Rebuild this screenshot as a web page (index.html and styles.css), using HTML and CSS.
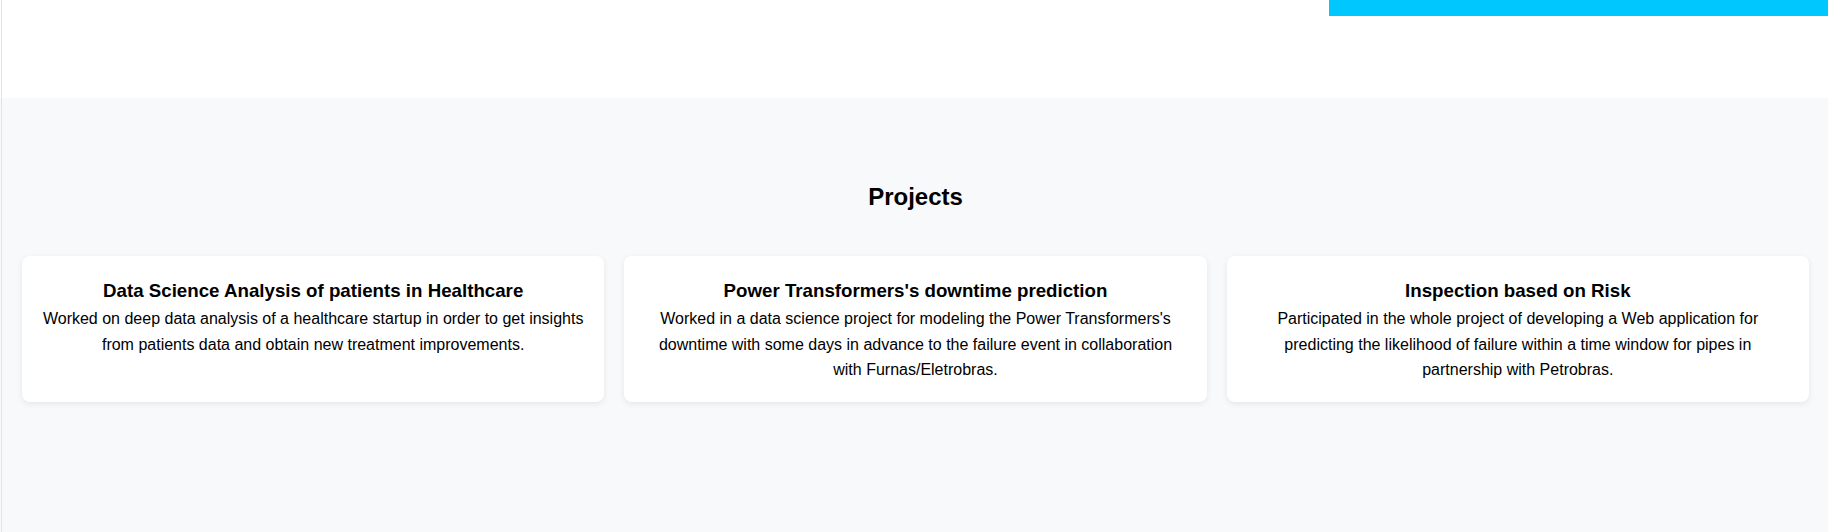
FILE: index.html
```html
<!DOCTYPE html>
<html lang="en">
<head>
<meta charset="utf-8">
<title>Projects</title>
<link rel="stylesheet" href="styles.css">
</head>
<body>
  <header class="top">
    <div class="top-bar"></div>
  </header>
  <section class="projects">
    <h2 class="projects-title">Projects</h2>
    <div class="cards">
      <article class="card">
        <h3 class="card-title">Data Science Analysis of patients in Healthcare</h3>
        <p class="card-text">Worked on deep data analysis of a healthcare startup in order to get insights from patients data and obtain new treatment improvements.</p>
      </article>
      <article class="card">
        <h3 class="card-title">Power Transformers's downtime prediction</h3>
        <p class="card-text">Worked in a data science project for modeling the Power Transformers's downtime with some days in advance to the failure event in collaboration with Furnas/Eletrobras.</p>
      </article>
      <article class="card">
        <h3 class="card-title">Inspection based on Risk</h3>
        <p class="card-text">Participated in the whole project of developing a Web application for predicting the likelihood of failure within a time window for pipes in partnership with Petrobras.</p>
      </article>
    </div>
  </section>
</body>
</html>
```

FILE: styles.css
```css
html, body {
  margin: 0;
  padding: 0;
}

body {
  font-family: "Liberation Sans", Arial, sans-serif;
  color: #000;
  background: #f8f9fa;
  height: 532px;
  overflow: hidden;
  display: flex;
  flex-direction: column;
}

.top {
  height: 98px;
  flex: none;
  background:
    linear-gradient(to right, transparent 1px, #e4e4e4 1px, #e4e4e4 2px, transparent 2px),
    #ffffff;
  display: flex;
  justify-content: flex-end;
  align-items: flex-start;
}

.top-bar {
  width: 499px;
  height: 16px;
  background: #00c8ff;
}

.projects {
  flex: 1;
  background:
    linear-gradient(to right, transparent 1px, #e4e4e4 1px, #e4e4e4 2px, transparent 2px),
    #f8f9fa;
  padding: 85px 19px 40px 22px;
}

.projects-title {
  margin: 0 0 45px;
  font-size: 24px;
  font-weight: bold;
  line-height: normal;
  text-align: center;
}

.cards {
  display: grid;
  grid-template-columns: repeat(3, 1fr);
  gap: 20px;
}

.card {
  background: #ffffff;
  border-radius: 8px;
  box-shadow: 0 2px 6px rgba(0, 0, 0, 0.08);
  padding: 24px 20px 19px;
  text-align: center;
}

.card-title {
  margin: 0 0 4px;
  font-size: 18.72px;
  font-weight: bold;
  line-height: normal;
}

.card-text {
  margin: 0;
  font-size: 16px;
  line-height: 25.6px;
}
```
